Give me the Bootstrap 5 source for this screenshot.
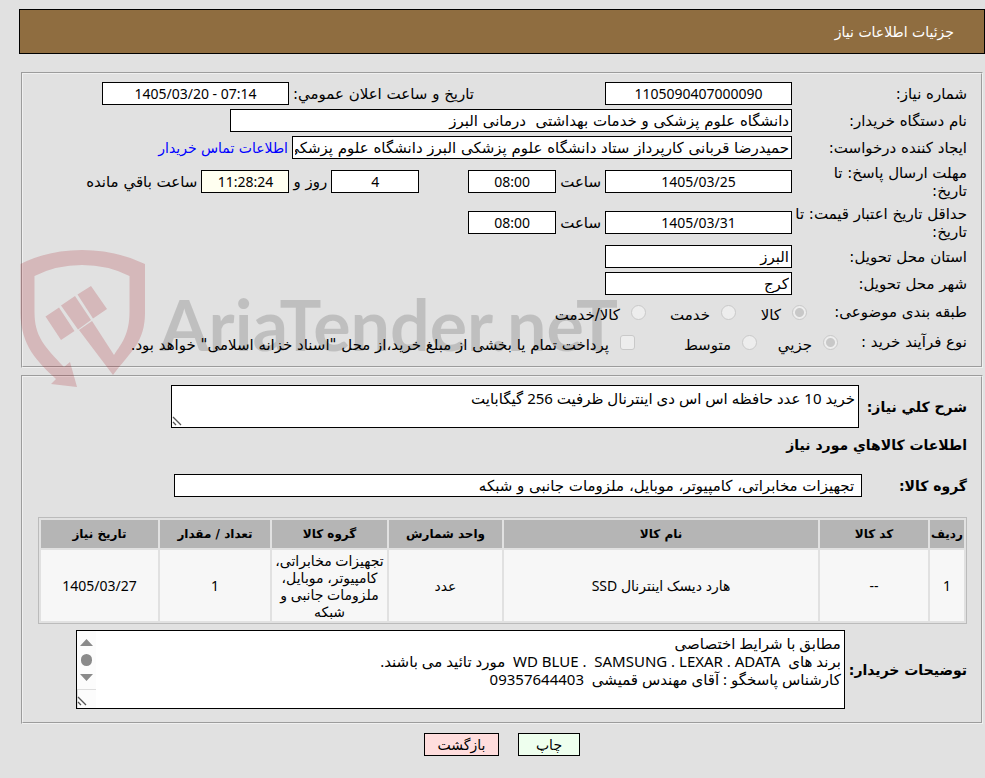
<!DOCTYPE html>
<html lang="fa" dir="rtl">
<head>
<meta charset="utf-8">
<meta name="viewport" content="width=device-width, initial-scale=1">
<title>جزئیات اطلاعات نیاز</title>
<link rel="stylesheet" href="https://cdn.jsdelivr.net/npm/bootstrap@5.3.0/dist/css/bootstrap.min.css">
<style>
body{background:#e1e1e1;color:#000;font:15px/18px "DejaVu Sans",sans-serif}
.title-bar{background:#8f6d40;border:1px solid #000;color:#fff;height:45px;margin:9px 0 18px 0;padding:0 30px;font-size:14px;font-weight:400;line-height:18px}
.page-wrap{padding-left:19px}
.panel{border:2px groove #f0f0f0;margin:0 2px 7px;padding:6px 14px 9px 15px;min-width:0}
.line{min-height:27px}
.line.tall{min-height:41px}
.line.opts{min-height:30px}
.cap{flex:0 0 175px;white-space:nowrap}
.cap.mid{flex-basis:160px}
.cap.short{flex-basis:129px}
.cap-group{flex:0 0 105px}
.cap-desc{flex:0 0 104px}
.box{border:1px solid #000;border-radius:0;background:#fff;color:#000;height:23px;padding:0 2px;font-size:15px;line-height:18px;min-width:0}
.num{font-family:"Noto Sans","DejaVu Sans",sans-serif;font-size:14px;text-align:center}
.w-a{width:187px}.w-b{width:88px}.w-c{width:562px}.w-d{width:500px}.w-e{width:688px}
.timer{background:#fffff0}
.first-part{flex:0 0 318px}
.gap-wide{margin-right:45px}
.contact{color:#00f;text-decoration:none;font-size:14px}
.opt{flex:0 0 auto}
.opt-1{width:71px}.opt-2{width:90px}.opt-3{width:81px}.opt-4{width:122px}
.opt input{appearance:none;width:15px;height:15px;margin:0;background:#ededed;border:1px solid #c9c9c9;border-radius:50%;flex:none}
.opt input[type=checkbox]{border-radius:3px}
.opt input:checked{background:radial-gradient(circle,#c8c8c8 0 4px,#ededed 5px)}
.opt label{margin:6px 11px 0 0;white-space:nowrap}
.memo{display:block;width:100%;border:1px solid #000;border-radius:0;background:#fff;color:#000;padding:3px;resize:none;overflow:hidden;font-family:"Noto Sans","DejaVu Sans",sans-serif;font-size:15px;line-height:18px}
.memo-wrap{position:relative}
.memo-1{flex:0 1 688px}.memo-2{flex:0 1 769px}
.memo-1 .memo{height:43px}.memo-2 .memo{height:79px}
.over-grip{position:absolute;left:1px;bottom:1px}
.strong-cap{font-size:14px;font-weight:700;line-height:18px;margin:0;white-space:nowrap}
.desc-row{padding-top:2px}
.buyer-notes{margin-top:6px;padding-bottom:4px}
.items{width:100%;border:1px solid #bbb;border-collapse:separate;border-spacing:2px;font-family:"Noto Sans","DejaVu Sans",sans-serif;font-size:14px;line-height:17px;text-align:center;table-layout:fixed}
.items th{background:#b5b5b5;height:28px;padding:0;font-family:"DejaVu Sans",sans-serif;font-size:12px;white-space:nowrap}
.items td{background:#f7f7f7;height:71px;padding:1px}
.act{border:1px solid #000;border-radius:0;height:23px;padding:0;font-size:14px;line-height:18px;color:#000}
.actions{gap:19px;padding-top:2px}
.act-print{width:62px;background:#efe}
.act-back{width:75px;background:#fdd}
.brand-mark{position:absolute;left:0;top:173px;pointer-events:none}
.brand-mark text{font-family:"Lato","Liberation Sans",sans-serif;font-weight:700}
</style>
<script src="https://cdn.jsdelivr.net/npm/bootstrap@5.3.0/dist/js/bootstrap.bundle.min.js"></script>
</head>
<body>
<div class="page-wrap d-flow-root overflow-hidden">
<h1 class="title-bar d-flex align-items-center">جزئیات اطلاعات نیاز</h1>
<main class="position-relative">
<fieldset class="panel">
  <div class="line d-flex align-items-center">
    <label class="cap" for="num">شماره نیاز:</label>
    <div class="first-part"><input class="box num w-a" id="num" value="1105090407000090" readonly></div>
    <label for="pub" class="ps-1">تاریخ و ساعت اعلان عمومي:</label>
    <input class="box num w-a" id="pub" value="1405/03/20 - 07:14" dir="ltr" readonly>
  </div>
  <div class="line d-flex align-items-center">
    <label class="cap" for="org">نام دستگاه خریدار:</label>
    <input class="box w-c" id="org" value="دانشگاه علوم پزشکی و خدمات بهداشتی  درمانی البرز" readonly>
  </div>
  <div class="line d-flex align-items-center">
    <label class="cap" for="req">ایجاد کننده درخواست:</label>
    <input class="box w-d" id="req" value="حمیدرضا قربانی کارپرداز ستاد دانشگاه علوم پزشکی البرز دانشگاه علوم پزشکی و خدمات بهداشتی  درمانی البرز" readonly>
    <a class="contact me-1" href="#">اطلاعات تماس خریدار</a>
  </div>
  <div class="line tall d-flex align-items-center">
    <label class="cap" for="due">مهلت ارسال پاسخ: تا<br>تاریخ:</label>
    <div class="d-flex align-items-center gap-1">
      <input class="box num w-a" id="due" value="1405/03/25" readonly>
      <label for="dueh">ساعت</label>
      <input class="box num w-b" id="dueh" value="08:00" readonly>
      <input class="box num w-b gap-wide" id="days" value="4" readonly>
      <label for="days">روز و</label>
      <input class="box num w-b timer" id="left" value="11:28:24" readonly>
      <label for="left">ساعت باقي مانده</label>
    </div>
  </div>
  <div class="line tall d-flex align-items-center">
    <label class="cap" for="val">حداقل تاریخ اعتبار قیمت: تا<br>تاریخ:</label>
    <div class="d-flex align-items-center gap-1">
      <input class="box num w-a" id="val" value="1405/03/31" readonly>
      <label for="valh">ساعت</label>
      <input class="box num w-b" id="valh" value="08:00" readonly>
    </div>
  </div>
  <div class="line d-flex align-items-center">
    <label class="cap" for="prov">استان محل تحویل:</label>
    <input class="box w-a" id="prov" value="البرز" readonly>
  </div>
  <div class="line d-flex align-items-center">
    <label class="cap" for="city">شهر محل تحویل:</label>
    <input class="box w-a" id="city" value="کرج" readonly>
  </div>
  <div class="line opts d-flex align-items-center">
    <span class="cap mid">طبقه بندی موضوعی:</span>
    <div class="opt opt-1 d-flex align-items-center"><input type="radio" name="kind" id="k1" checked disabled><label for="k1">کالا</label></div>
    <div class="opt opt-2 d-flex align-items-center"><input type="radio" name="kind" id="k2" disabled><label for="k2">خدمت</label></div>
    <div class="opt d-flex align-items-center"><input type="radio" name="kind" id="k3" disabled><label for="k3">کالا/خدمت</label></div>
  </div>
  <div class="line opts d-flex align-items-center">
    <span class="cap short">نوع فرآیند خرید :</span>
    <div class="opt opt-3 d-flex align-items-center"><input type="radio" name="proc" id="p1" checked disabled><label for="p1">جزیي</label></div>
    <div class="opt opt-4 d-flex align-items-center"><input type="radio" name="proc" id="p2" disabled><label for="p2">متوسط</label></div>
    <div class="opt d-flex align-items-center"><input type="checkbox" id="tr" disabled><label for="tr">پرداخت تمام یا بخشی از مبلغ خرید،از محل "اسناد خزانه اسلامی" خواهد بود.</label></div>
  </div>
</fieldset>

<fieldset class="panel">
  <div class="d-flex align-items-center gap-1 desc-row">
    <label class="strong-cap cap-desc" for="desc">شرح کلي نیاز:</label>
    <div class="memo-wrap memo-1">
      <textarea class="memo" id="desc" readonly>خرید 10 عدد حافظه اس اس دی اینترنال ظرفیت 256 گیگابایت</textarea>
      <svg class="over-grip" width="12" height="12" viewBox="0 0 12 12" stroke="#555" stroke-width="1.3"><path d="M1 2l8 8M1 7l3 3"/></svg>
    </div>
  </div>
  <h2 class="strong-cap pt-2">اطلاعات کالاهاي مورد نیاز</h2>
  <div class="d-flex align-items-center py-3 my-1">
    <label class="strong-cap cap-group" for="grp">گروه کالا:</label>
    <input class="box w-e" id="grp" value=" تجهیزات مخابراتی، کامپیوتر، موبایل، ملزومات جانبی و شبکه" readonly>
  </div>
  <table class="items">
    <colgroup><col style="width:34px"><col style="width:108px"><col><col style="width:113px"><col style="width:115px"><col style="width:110px"><col style="width:117px"></colgroup>
    <thead><tr><th>ردیف</th><th>کد کالا</th><th>نام کالا</th><th>واحد شمارش</th><th>گروه کالا</th><th>تعداد / مقدار</th><th>تاریخ نیاز</th></tr></thead>
    <tbody><tr><td>1</td><td>--</td><td>هارد دیسک اینترنال SSD</td><td>عدد</td><td>تجهیزات مخابراتی، کامپیوتر، موبایل، ملزومات جانبی و شبکه</td><td>1</td><td>1405/03/27</td></tr></tbody>
  </table>
  <div class="d-flex align-items-center gap-1 buyer-notes">
    <label class="strong-cap" for="notes">توضیحات خریدار:</label>
    <div class="memo-wrap memo-2">
      <textarea class="memo" id="notes" readonly>مطابق با شرایط اختصاصی
برند های  WD BLUE .  SAMSUNG . LEXAR . ADATA  مورد تائید می باشند.
کارشناس پاسخگو : آقای مهندس قمیشی  09357644403</textarea>
      <svg class="over-grip" width="19" height="77" viewBox="0 0 19 77"><path d="M0 0h19v77H0z" fill="#fcfcfc"/><path d="M0 58.500h19M.5 58v19" stroke="#ddd" fill="none"/><path d="M3 15l6.500-7 6.500 7zM3 43h13l-6.500 7z" fill="#8a8a8a"/><rect x="4" y="23" width="11" height="12" rx="5.500" fill="#8a8a8a"/><path d="M1 66l8 8M1 71l3 3" stroke="#555" stroke-width="1.300"/></svg>
    </div>
  </div>
</fieldset>

<svg class="brand-mark" width="605" height="145" viewBox="19 245 605 145" direction="ltr" aria-hidden="true">
  <g fill="rgba(165,20,30,.2)">
    <path fill-rule="evenodd" d="M20.500 264Q48 250 82 250T145 264V312C145 342 132 350 113 375L79 330 92 321 114 355C122 343 129.500 334 129.500 312V276Q108 265 82 265T34.500 276V312C34.500 336 44 346 64 367L70 362 77 387 51 384 56 379C38 362 20.500 346 20.500 312Z"/>
    <path d="M45.500 316.500L59 307.500 74.500 331 61 340zM61 305.500L75 296 91 320 78 329.500zM77.500 294.500L91 286 107 309 93 318.500z"/>
  </g>
  <text x="160" y="351" font-size="70" fill="rgba(0,0,0,.15)">AriaTender.neT</text>
</svg>
</main>
<div class="d-flex justify-content-center actions">
  <button type="button" class="act act-print">چاپ</button>
  <button type="button" class="act act-back">بازگشت</button>
</div>
</div>
</body>
</html>
